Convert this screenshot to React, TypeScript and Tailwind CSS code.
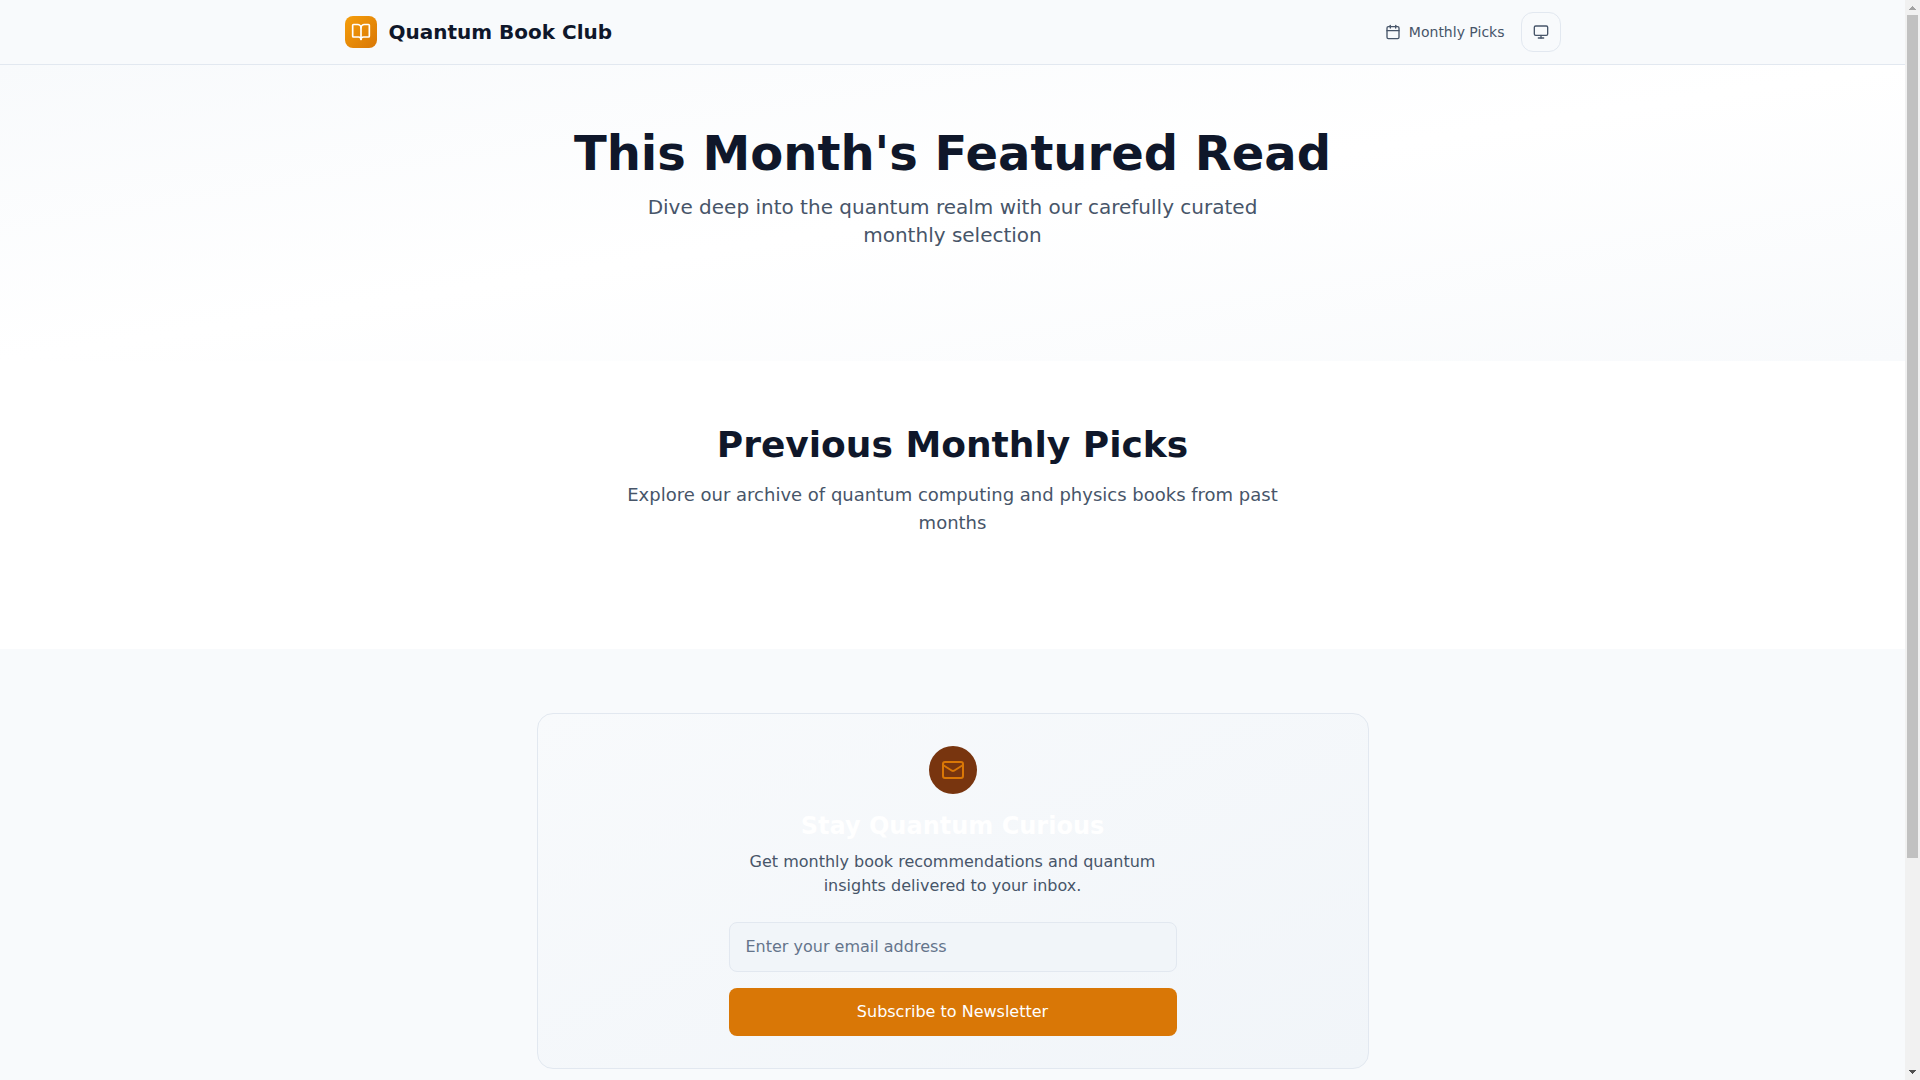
import { BookOpen, Calendar, Mail, Monitor } from "lucide-react";

function Header() {
  return (
    <header className="border-b border-[#e2e8f0] bg-[#f8fafc]">
      <div className="mx-auto flex h-16 max-w-7xl items-center justify-between px-8">
        <a href="#home" className="flex items-center gap-3">
          <span className="flex size-8 items-center justify-center rounded-lg bg-linear-to-br from-[#f59e0b] to-[#d97706]">
            <BookOpen className="size-5 text-white" aria-hidden="true" />
          </span>
          <span className="text-xl font-bold text-[#0f172a]">Quantum Book Club</span>
        </a>
        <nav className="flex items-center gap-4">
          <a href="#picks" className="flex items-center gap-2 text-sm font-medium text-[#475569]">
            <Calendar className="size-4" aria-hidden="true" />
            Monthly Picks
          </a>
          <button
            type="button"
            aria-label="Change theme"
            className="flex size-10 items-center justify-center rounded-xl border border-[#e2e8f0] bg-[#f8fafc] text-[#475569]"
          >
            <Monitor className="size-4" aria-hidden="true" />
          </button>
        </nav>
      </div>
    </header>
  );
}

function Featured() {
  return (
    <section className="bg-linear-to-br from-[#f8fafc] via-white to-[#f8fafc] py-16">
      <div className="mx-auto max-w-7xl px-8">
        <div className="mb-12 text-center">
          <h1 className="mb-4 text-5xl font-bold text-[#0f172a]">This Month's Featured Read</h1>
          <p className="mx-auto max-w-2xl text-xl text-[#475569]">
            Dive deep into the quantum realm with our carefully curated monthly selection
          </p>
        </div>
      </div>
    </section>
  );
}

function PreviousPicks() {
  return (
    <section id="picks" className="bg-white py-16">
      <div className="mx-auto max-w-7xl px-8">
        <div className="mb-12 text-center">
          <h2 className="mb-4 text-4xl font-bold text-[#0f172a]">Previous Monthly Picks</h2>
          <p className="mx-auto max-w-2xl text-lg text-[#475569]">
            Explore our archive of quantum computing and physics books from past months
          </p>
        </div>
      </div>
    </section>
  );
}

function Newsletter() {
  return (
    <section className="bg-[#f8fafc] py-16">
      <div className="mx-auto max-w-4xl px-8">
        <div className="rounded-2xl border border-[#e2e8f0] bg-linear-to-br from-[#f8fafc] to-[#f1f5f9] p-8">
          <div className="mx-auto max-w-md text-center">
            <div className="mx-auto mb-4 flex size-12 items-center justify-center rounded-full bg-[#78350f]">
              <Mail className="size-6 text-[#d97706]" aria-hidden="true" />
            </div>
            <h3 className="mb-2 text-2xl font-bold text-white">Stay Quantum Curious</h3>
            <p className="mb-6 text-base text-[#475569]">
              Get monthly book recommendations and quantum insights delivered to your inbox.
            </p>
            <form className="flex flex-col gap-4" onSubmit={(e) => e.preventDefault()}>
              <input
                type="email"
                aria-label="Email address"
                placeholder="Enter your email address"
                className="w-full rounded-lg border border-[#e2e8f0] bg-[#f1f5f9] px-4 py-3 text-[#0f172a] placeholder:text-[#64748b]"
              />
              <button type="submit" className="w-full rounded-lg bg-[#d97706] px-6 py-3 font-medium text-white">
                Subscribe to Newsletter
              </button>
            </form>
          </div>
        </div>
      </div>
    </section>
  );
}

function Scrollbar() {
  return (
    <div aria-hidden="true" className="flex w-[15px] shrink-0 flex-col items-center bg-[#f1f1f1]">
      <svg className="h-[15px] w-[15px] shrink-0" viewBox="0 0 15 15" shapeRendering="crispEdges">
        <path d="M7 6h1v1h1v1h1v1h1v1H4V9h1V8h1V7h1z" fill="#a3a3a3" />
      </svg>
      <div className="w-full flex-1 px-[2px]">
        <div className="h-[80.3%] bg-[#c1c1c1]" />
      </div>
      <svg className="h-[15px] w-[15px] shrink-0" viewBox="0 0 15 15" shapeRendering="crispEdges">
        <path d="M4 5h7v1h-1v1H9v1H8v1H7V8H6V7H5V6H4z" fill="#505050" />
      </svg>
    </div>
  );
}

export default function App() {
  return (
    <div className="flex h-screen bg-white font-['DejaVu_Sans',sans-serif]">
      <main className="min-w-0 flex-1 overflow-hidden bg-[#f8fafc]">
        <Header />
        <Featured />
        <PreviousPicks />
        <Newsletter />
      </main>
      <Scrollbar />
    </div>
  );
}
